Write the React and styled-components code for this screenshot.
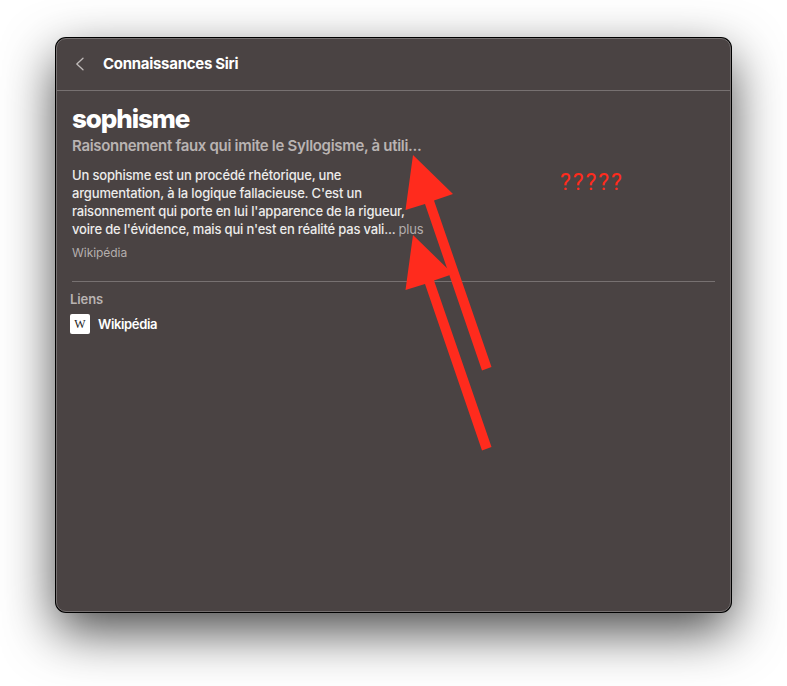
import styled, { createGlobalStyle } from 'styled-components'

const GlobalStyle = createGlobalStyle`
  * {
    box-sizing: border-box;
  }
  body {
    margin: 0;
    background: #fff;
    font-family: Inter, "Liberation Sans", sans-serif;
    -webkit-font-smoothing: antialiased;
  }
`;

const Page = styled.main`
  position: relative;
  width: 787px;
  height: 686px;
  padding: 38px 56px 74px;
  overflow: hidden;
`;

const Window = styled.section`
  height: 574px;
  border: 1px solid #757070;
  border-radius: 10px;
  background: #4a4343;
  box-shadow: 0 0 0 1px #000, 0 19px 52px rgba(0, 0, 0, 0.72);
`;

const Header = styled.header`
  display: flex;
  align-items: center;
  height: 52px;
  padding: 0 18px 2px;
  border-bottom: 1px solid #777171;
`;

const BackButton = styled.button`
  display: flex;
  width: 28px;
  padding: 0;
  border: 0;
  background: none;
`;

const HeaderTitle = styled.h1`
  margin: 0;
  font-size: 15px;
  font-weight: 700;
  line-height: 20px;
  letter-spacing: -0.29px;
  color: #fff;
`;

const Content = styled.article`
  margin: 0 15px;
  padding-top: 12px;
  height: 191px;
  border-bottom: 1px solid #777171;
`;

const Word = styled.h2`
  margin: 0;
  font-size: 26px;
  font-weight: 800;
  line-height: 32px;
  letter-spacing: -1.1px;
  color: #fff;
`;

const Subtitle = styled.p`
  margin: 1px 0 0;
  font-size: 15px;
  font-weight: 600;
  line-height: 20px;
  letter-spacing: -0.31px;
  white-space: nowrap;
  color: #b9b3b2;
`;

const Definition = styled.p`
  margin: 10px 0 0;
  font-size: 13px;
  font-weight: 500;
  line-height: 18px;
  color: #edeceb;
`;

const Line = styled.span`
  display: block;
  white-space: nowrap;
  letter-spacing: ${(props) => props.$spacing};
`;

const More = styled.span`
  font-weight: 400;
  color: #b3adac;
`;

const Source = styled.p`
  margin: 7px 0 0;
  font-size: 12px;
  line-height: 16px;
  letter-spacing: -0.05px;
  color: #b5afae;
`;

const Links = styled.section`
  padding: 8px 13px;
`;

const LinksTitle = styled.h3`
  margin: 0;
  font-size: 13px;
  font-weight: 600;
  line-height: 18px;
  letter-spacing: -0.1px;
  color: #b9b3b2;
`;

const LinkRow = styled.div`
  display: flex;
  align-items: center;
  gap: 8px;
  margin-top: 6px;
  font-size: 13px;
  font-weight: 600;
  line-height: 20px;
  letter-spacing: -0.35px;
  color: #fff;
`;

const Favicon = styled.span`
  display: flex;
  align-items: center;
  justify-content: center;
  width: 20px;
  height: 20px;
  border-radius: 2px;
  background: #fff;
  font-family: "Liberation Serif", serif;
  font-size: 12px;
  font-weight: 400;
  letter-spacing: 0;
  color: #222;
`;

const Arrows = styled.svg`
  position: absolute;
  top: 0;
  left: 0;
  pointer-events: none;
`;

const Note = styled.span`
  position: absolute;
  top: 168px;
  left: 560px;
  font-family: Roboto, "Liberation Sans", sans-serif;
  font-size: 23px;
  line-height: 30px;
  letter-spacing: 1.9px;
  color: #ff2b1d;
`;

const arrowPoints = '413,155 453,194 434,200.5 491.5,367 482,370.5 425,204 405.5,210';

const App = () => {
  return (
    <>
      <GlobalStyle />
      <Page>
        <Window>
          <Header>
            <BackButton aria-label="Retour">
              <svg width="10" height="14" viewBox="0 0 10 14" fill="none">
                <path d="M8 1.2 1.8 7 8 12.8" stroke="#c0bbba" strokeWidth="1.3" strokeLinecap="round" strokeLinejoin="round" />
              </svg>
            </BackButton>
            <HeaderTitle>Connaissances Siri</HeaderTitle>
          </Header>
          <Content>
            <Word>sophisme</Word>
            <Subtitle>Raisonnement faux qui imite le Syllogisme, à utili...</Subtitle>
            <Definition>
              <Line $spacing="-0.17px">Un sophisme est un procédé rhétorique, une</Line>
              <Line $spacing="-0.16px">argumentation, à la logique fallacieuse. C'est un</Line>
              <Line $spacing="-0.18px">raisonnement qui porte en lui l'apparence de la rigueur,</Line>
              <Line $spacing="-0.18px">voire de l'évidence, mais qui n'est en réalité pas vali... <More>plus</More></Line>
            </Definition>
            <Source>Wikipédia</Source>
          </Content>
          <Links>
            <LinksTitle>Liens</LinksTitle>
            <LinkRow>
              <Favicon>W</Favicon>
              Wikipédia
            </LinkRow>
          </Links>
        </Window>
        <Arrows width="787" height="686" viewBox="0 0 787 686" fill="#ff2b1d">
          <polygon points={arrowPoints} />
          <polygon points={arrowPoints} transform="translate(0 80)" />
        </Arrows>
        <Note>?????</Note>
      </Page>
    </>
  );
};

export default App
